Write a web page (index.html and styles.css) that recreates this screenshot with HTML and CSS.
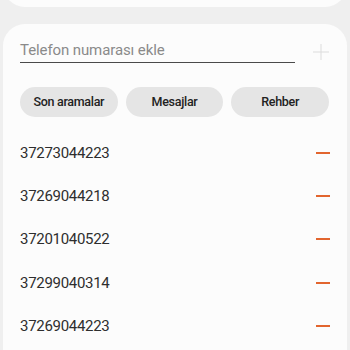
FILE: index.html
```html
<!DOCTYPE html>
<html lang="tr">
<head>
<meta charset="utf-8">
<link rel="stylesheet" href="styles.css">
</head>
<body>
<div class="top-card"></div>
<div class="card">
  <div class="input-row">
    <div class="field">Telefon numarası ekle</div>
    <svg class="plus" width="16" height="16" viewBox="0 0 16 16"><path d="M8 0V16M0 8H16" stroke="#dcdcdc" stroke-width="1" fill="none"/></svg>
  </div>
  <div class="buttons">
    <div class="btn">Son aramalar</div>
    <div class="btn">Mesajlar</div>
    <div class="btn">Rehber</div>
  </div>
  <div class="list">
    <div class="row"><span class="num">37273044223</span><span class="minus"></span></div>
    <div class="row"><span class="num">37269044218</span><span class="minus"></span></div>
    <div class="row"><span class="num">37201040522</span><span class="minus"></span></div>
    <div class="row"><span class="num">37299040314</span><span class="minus"></span></div>
    <div class="row"><span class="num">37269044223</span><span class="minus"></span></div>
  </div>
</div>
</body>
</html>
```
FILE: styles.css
```css
html, body {
  margin: 0;
  padding: 0;
  height: 100%;
  overflow: hidden;
}
body {
  background: #efefef;
  font-family: Roboto, "Noto Sans", sans-serif;
  color: #252525;
}
.top-card {
  height: 40px;
  margin: -33px 3px 0 3px;
  background: #fcfcfc;
  border-radius: 0 0 22px 22px;
}
.card {
  box-sizing: border-box;
  margin: 17px 3px 0 3px;
  background: #fcfcfc;
  border-radius: 22px 22px 0 0;
  padding: 14px 18px 0 17px;
  height: 326px;
  overflow: hidden;
}
.input-row {
  display: flex;
  align-items: center;
  justify-content: space-between;
}
.field {
  width: 275px;
  height: 24px;
  line-height: 24px;
  font-size: 15px;
  color: #8a8a8a;
  border-bottom: 1px solid #4a4a4a;
  letter-spacing: -0.1px;
}
.plus {
  display: block;
  margin-top: 2px;
}
.buttons {
  display: flex;
  gap: 8px;
  margin-top: 24px;
  width: 309px;
}
.btn {
  flex: 1;
  height: 30px;
  line-height: 30px;
  border-radius: 15px;
  background: #e5e5e5;
  text-align: center;
  font-size: 12.5px;
  font-weight: 500;
  color: #222;
  letter-spacing: -0.3px;
}
.list {
  margin-top: 14px;
}
.row {
  display: flex;
  align-items: center;
  justify-content: space-between;
  height: 43.4px;
}
.num {
  font-size: 15px;
  letter-spacing: -0.3px;
  color: #2e2e2e;
}
.minus {
  display: block;
  width: 14px;
  height: 2px;
  background: #e2652f;
  margin-right: -1px;
}
```
